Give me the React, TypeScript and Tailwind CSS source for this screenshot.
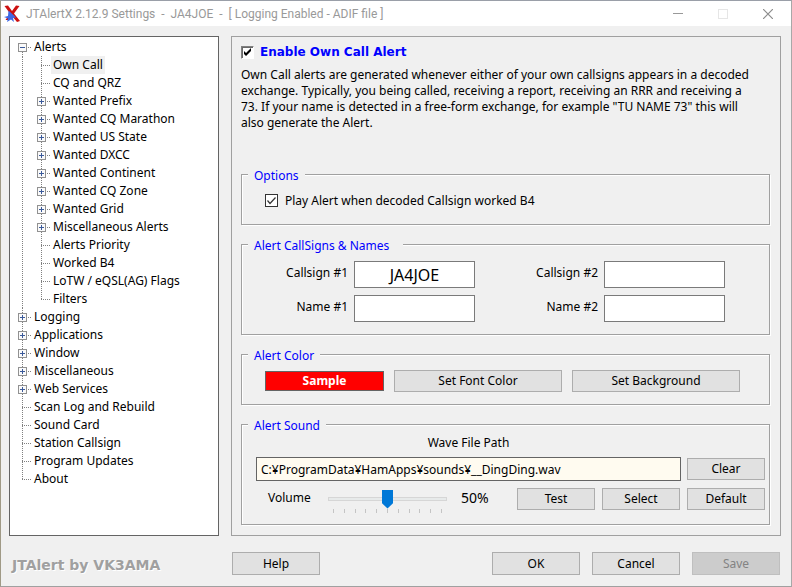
import React, { useState } from "react";

type TreeNode = { label: string; expandable?: boolean; open?: boolean; selected?: boolean; children?: TreeNode[] };

const tree: TreeNode[] = [
  {
    label: "Alerts",
    expandable: true,
    open: true,
    children: [
      { label: "Own Call", selected: true },
      { label: "CQ and QRZ" },
      { label: "Wanted Prefix", expandable: true },
      { label: "Wanted CQ Marathon", expandable: true },
      { label: "Wanted US State", expandable: true },
      { label: "Wanted DXCC", expandable: true },
      { label: "Wanted Continent", expandable: true },
      { label: "Wanted CQ Zone", expandable: true },
      { label: "Wanted Grid", expandable: true },
      { label: "Miscellaneous Alerts", expandable: true },
      { label: "Alerts Priority" },
      { label: "Worked B4" },
      { label: "LoTW / eQSL(AG) Flags" },
      { label: "Filters" },
    ],
  },
  { label: "Logging", expandable: true },
  { label: "Applications", expandable: true },
  { label: "Window", expandable: true },
  { label: "Miscellaneous", expandable: true },
  { label: "Web Services", expandable: true },
  { label: "Scan Log and Rebuild" },
  { label: "Sound Card" },
  { label: "Station Callsign" },
  { label: "Program Updates" },
  { label: "About" },
];

function Connector({ node, up, down }: { node: TreeNode; up: boolean; down: boolean }) {
  return (
    <svg width="14" height="18" viewBox="0 0 14 18" shapeRendering="crispEdges" className="shrink-0" aria-hidden="true">
      <path
        d={`${up ? "M4.5 0V10" : ""}${down ? "M4.5 10V18" : ""}M4 9.5H13`}
        stroke="#808080"
        strokeDasharray="1 1"
        fill="none"
      />
      {node.expandable && (
        <>
          <rect x="0.5" y="5.5" width="8" height="8" fill="#fafafa" stroke="#919191" />
          <path d={node.open ? "M2 9.5H7" : "M2 9.5H7M4.5 7V12"} stroke="#3b5a9a" fill="none" />
        </>
      )}
    </svg>
  );
}

function Branch({ nodes, root, nested }: { nodes: TreeNode[]; root?: boolean; nested?: boolean }) {
  return (
    <ul className={root ? "pl-2" : `ml-1 pl-[14px] ${nested ? "border-l border-dotted border-[#808080]" : ""}`}>
      {nodes.map((node, i) => (
        <li key={node.label}>
          <div className="flex h-[18px] items-start">
            <Connector node={node} up={!root || i > 0} down={i < nodes.length - 1} />
            <button type="button" className={`h-[18px] px-[2px] leading-[18px] whitespace-nowrap ${node.selected ? "bg-[#f0f0f0]" : ""}`}>
              {node.label}
            </button>
          </div>
          {node.children && <Branch nodes={node.children} nested={i < nodes.length - 1} />}
        </li>
      ))}
    </ul>
  );
}

function Group({ title, wide, className, children }: { title: string; wide?: boolean; className: string; children: React.ReactNode }) {
  return (
    <fieldset className="border border-[#a0a0a0] shadow-[1px_1px_0_#fff,inset_1px_1px_0_#fff]">
      <legend className={`ml-[6px] h-[17px] bg-[#f0f0f0] pl-[6px] leading-[19px] text-[#0000ff] ${wide ? "pr-[14px]" : "pr-[6px]"}`}>{title}</legend>
      <div className={className}>{children}</div>
    </fieldset>
  );
}

function Button({ className, disabled, children }: { className: string; disabled?: boolean; children: React.ReactNode }) {
  return (
    <button
      type="button"
      disabled={disabled}
      className={`shrink-0 border border-[#adadad] bg-[#e1e1e1] disabled:border-[#bfbfbf] disabled:bg-[#cccccc] disabled:text-[#838383] ${className}`}
    >
      {children}
    </button>
  );
}

function Field({ id, label, value }: { id: string; label: string; value?: string }) {
  return (
    <div className="flex gap-[6px]">
      <label htmlFor={id} className="w-[106px] text-right leading-[23px]">{label}</label>
      <input id={id} defaultValue={value} className="h-[27px] w-[121px] border border-[#7a7a7a] bg-white text-center text-[16px] outline-none" />
    </div>
  );
}

export default function App() {
  const [volume, setVolume] = useState(50);
  return (
    <div className="flex min-h-screen flex-col border border-t-[#9a9fa8] border-r-[#a8a8a8] border-b-[#a0a0a0] border-l-[#a09a86] bg-[#f0f0f0] font-['Noto_Sans',sans-serif] text-[12px] text-black">
      <header className="flex h-[25px] items-center bg-white pl-[3px] text-[#999999]">
        <svg width="16" height="18" viewBox="0 0 16 18" aria-hidden="true">
          <path d="M0.5 1L4 0.5L8 6L12 0.5L15.5 1L10 8.5L16 16L13 17L8 11L4 15L1.5 15L6 8.5Z" fill="#cc1010" />
          <path d="M4.5 5.5L12 12.5L9 13L10 17L7 14.5L3 17L4 13.5L0 12L4 11Z" fill="#3f68e4" />
        </svg>
        <h1 className="ml-[6px] flex-1 font-['Roboto',sans-serif] whitespace-pre">JTAlertX 2.12.9 Settings  -  JA4JOE  -  [ Logging Enabled - ADIF file ]</h1>
        <div className="flex items-center">
          <button type="button" aria-label="Minimize" className="flex w-[45px] justify-center">
            <svg width="10" height="10" shapeRendering="crispEdges"><path d="M0 4.5H10" stroke="#999" /></svg>
          </button>
          <button type="button" aria-label="Maximize" disabled className="flex w-[45px] justify-center">
            <svg width="10" height="10" shapeRendering="crispEdges"><path d="M.5 .5H9.5V9.5H.5Z" stroke="#e6e6e6" fill="none" /></svg>
          </button>
          <button type="button" aria-label="Close" className="flex w-[46px] justify-center">
            <svg width="10" height="10"><path d="M0 0L10 10M10 0L0 10" stroke="#8c8c8c" strokeWidth="1.2" /></svg>
          </button>
        </div>
      </header>

      <main className="flex gap-[12px] pt-[10px] pr-[10px] pl-2">
        <nav className="w-[210px] shrink-0 border border-[#646464] bg-white pt-px" aria-label="Settings sections">
          <Branch nodes={tree} root />
        </nav>

        <section className="flex-1 border border-[#a0a0a0] pr-[10px] pb-[10px] pl-[9px]">
          <label className="mt-[6px] flex h-[18px] items-center gap-[6px] font-['DejaVu_Sans',sans-serif] font-bold text-[#0000ff]">
            <span className="relative block size-[13px]">
              <input
                type="checkbox"
                defaultChecked
                className="peer block size-[13px] appearance-none border border-t-[#808080] border-r-white border-b-white border-l-[#808080] bg-white shadow-[inset_1px_1px_0_#696969]"
              />
              <svg viewBox="0 0 13 13" className="pointer-events-none absolute inset-0 hidden peer-checked:block" aria-hidden="true">
                <path d="M3 5V8L5 10L10 5V2L5 7Z" fill="#000" />
              </svg>
            </span>
            Enable Own Call Alert
          </label>
          <p className="mt-[6px] min-h-[99px] pr-3 leading-[16px]">
            Own Call alerts are generated whenever either of your own callsigns appears in a decoded exchange. Typically, you being called, receiving a report, receiving an RRR and receiving a 73. If your name is detected in a free-form exchange, for example "TU NAME 73" this will also generate the Alert.
          </p>

          <div className="flex flex-col gap-[11px]">
            <Group title="Options" className="pt-[8px] pb-[14px] pl-[23px]">
              <label className="flex items-center gap-[7px] leading-[19px]">
                <span className="relative block size-[13px]">
                  <input type="checkbox" defaultChecked className="peer block size-[13px] appearance-none border border-[#333333] bg-white" />
                  <svg viewBox="0 0 13 13" className="pointer-events-none absolute inset-0 hidden peer-checked:block" aria-hidden="true">
                    <path d="M2.5 6.5L5 9.5L10.5 3.5" stroke="#333" strokeWidth="1.2" fill="none" />
                  </svg>
                </span>
                Play Alert when decoded Callsign worked B4
              </label>
            </Group>

            <Group title="Alert CallSigns & Names" wide className="pt-[8px] pb-[12px]">
              <div className="flex gap-[17px]">
                <div className="flex flex-col gap-[7px]">
                  <Field id="call1" label="Callsign #1" value="JA4JOE" />
                  <Field id="name1" label="Name #1" />
                </div>
                <div className="flex flex-col gap-[7px]">
                  <Field id="call2" label="Callsign #2" />
                  <Field id="name2" label="Name #2" />
                </div>
              </div>
            </Group>

            <Group title="Alert Color" className="pt-[7px] pb-[12px] pl-[23px]">
              <div className="flex items-center gap-[10px]">
                <output className="h-[20px] w-[119px] border border-[#646464] bg-[#ff0000] text-center leading-[18px] font-bold text-white">Sample</output>
                <Button className="h-[22px] w-[168px]">Set Font Color</Button>
                <Button className="h-[22px] w-[168px]">Set Background</Button>
              </div>
            </Group>

            <Group title="Alert Sound" className="pr-[4px] pb-[11px] pl-[14px]">
              <div className="flex items-end gap-[6px]">
                <div className="flex flex-1 flex-col">
                  <label htmlFor="wave" className="text-center leading-[19px]">Wave File Path</label>
                  <input id="wave" defaultValue="C:¥ProgramData¥HamApps¥sounds¥__DingDing.wav" className="mt-[5px] h-[24px] border border-[#646464] bg-[#fffbf0] px-1 outline-none" />
                </div>
                <Button className="mb-px h-[22px] w-[78px]">Clear</Button>
              </div>
              <div className="mt-[7px] flex gap-[7px]">
                <label htmlFor="volume" className="w-[65px] pl-3 leading-[19px]">Volume</label>
                <div className="w-[119px]">
                  <input
                    id="volume"
                    type="range"
                    value={volume}
                    onChange={(e) => setVolume(Number(e.target.value))}
                    className="mt-px block h-[19px] w-full appearance-none bg-transparent [&::-webkit-slider-runnable-track]:h-[4px] [&::-webkit-slider-runnable-track]:border [&::-webkit-slider-runnable-track]:border-[#d6d6d6] [&::-webkit-slider-runnable-track]:bg-[#e7eaea] [&::-webkit-slider-thumb]:-mt-[8px] [&::-webkit-slider-thumb]:h-[19px] [&::-webkit-slider-thumb]:w-[11px] [&::-webkit-slider-thumb]:appearance-none [&::-webkit-slider-thumb]:bg-[#0078d7] [&::-webkit-slider-thumb]:[clip-path:polygon(0_0,100%_0,100%_72%,50%_100%,0_72%)]"
                  />
                  <div className="mt-px flex justify-between px-[5px]" aria-hidden="true">
                    {Array.from({ length: 11 }, (_, i) => (
                      <span key={i} className="h-1 w-px bg-[#c4c4c4]" />
                    ))}
                  </div>
                </div>
                <output htmlFor="volume" className="flex-1 pl-[7px] text-[14px] leading-[20px]">{volume}%</output>
                <Button className="h-[22px] w-[78px]">Test</Button>
                <Button className="h-[22px] w-[78px]">Select</Button>
                <Button className="h-[22px] w-[78px]">Default</Button>
              </div>
            </Group>
          </div>
        </section>
      </main>

      <footer className="flex gap-[12px] pt-[16px] pr-[11px] pb-[11px] pl-[11px]">
        <p className="h-[23px] w-[208px] font-['DejaVu_Sans',sans-serif] text-[14px] leading-[26px] font-bold text-[#a0a0a0] [text-shadow:1px_1px_0_#fff]">JTAlert by VK3AMA</p>
        <Button className="h-[23px] w-[88px]">Help</Button>
        <div className="flex flex-1 justify-end gap-[12px]">
          <Button className="h-[23px] w-[88px]">OK</Button>
          <Button className="h-[23px] w-[88px]">Cancel</Button>
          <Button className="h-[23px] w-[88px]" disabled>Save</Button>
        </div>
      </footer>
    </div>
  );
}
